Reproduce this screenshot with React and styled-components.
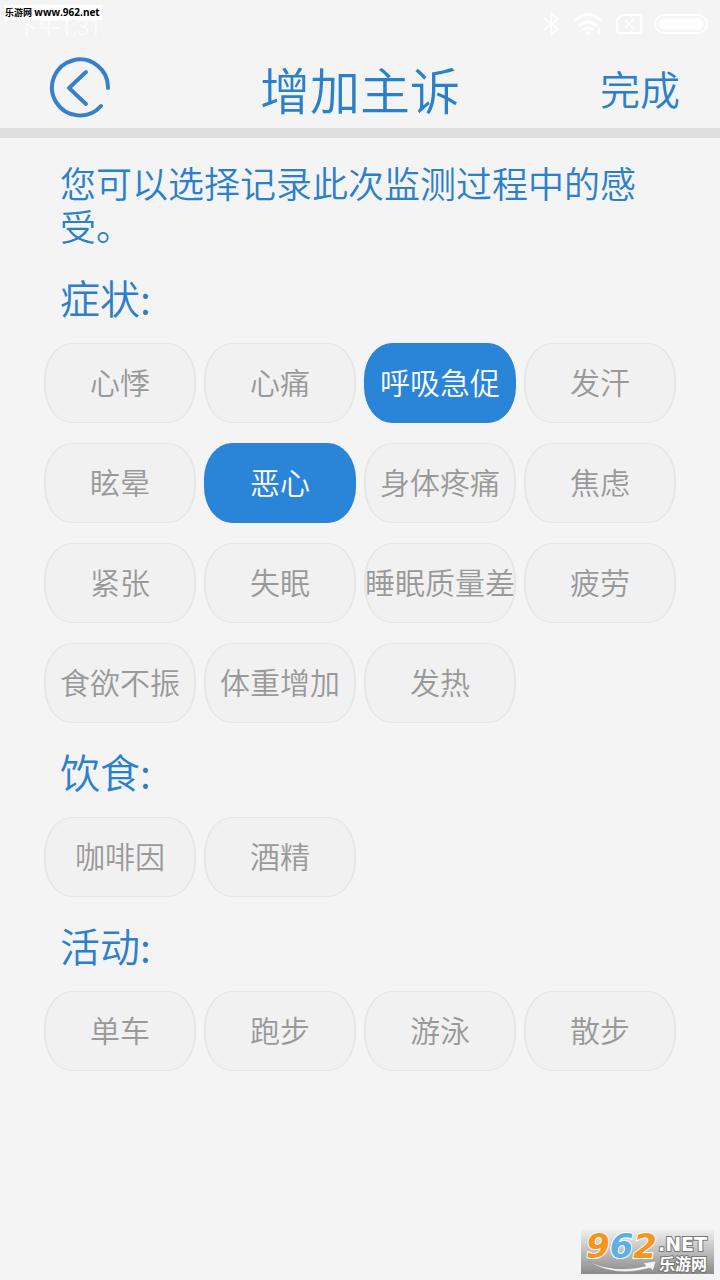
import styled, { createGlobalStyle, ThemeProvider } from 'styled-components';
import { useState } from 'react';

const theme = {
  blue: '#2a80cb',
  fill: '#2a84d8',
  page: '#f4f4f4',
  chip: '#f1f1f1',
  line: '#e6e6e6',
  grey: '#999999',
};

const GlobalStyle = createGlobalStyle`
  * {
    box-sizing: border-box;
  }
  body {
    margin: 0;
    background: #f4f4f4;
    font-family: 'Noto Sans CJK SC', sans-serif;
    font-weight: 350;
  }
  button {
    font: inherit;
    border: 0;
    padding: 0;
    background: none;
    cursor: pointer;
  }
`;

const Page = styled.div`
  position: relative;
  min-height: 100vh;
  color: ${({ theme }) => theme.blue};
  background: ${({ theme }) => theme.page};
`;

const StatusBar = styled.div`
  display: flex;
  align-items: center;
  justify-content: space-between;
  height: 48px;
  padding: 0 12px 0 16px;
  color: #fdfdfd;
  font-family: Roboto, 'Noto Sans CJK SC', sans-serif;
  font-size: 22px;
`;

const Clock = styled.span`
  padding-top: 8px;
  line-height: 32px;
`;

const StatusIcons = styled.div`
  display: flex;
  align-items: center;
  gap: 12px;
`;

const SiteTag = styled.div`
  position: absolute;
  top: 5px;
  left: 4px;
  padding: 0 2px 0 1px;
  color: #000;
  background: #fff;
  font-family: 'Open Sans', 'Noto Sans CJK SC', sans-serif;
  font-size: 9px;
  font-weight: 700;
  line-height: 14px;
  white-space: nowrap;
`;

const SiteUrl = styled.span`
  font-size: 10px;
`;

const TitleBar = styled.header`
  display: grid;
  grid-template-columns: 1fr auto 1fr;
  align-items: center;
  height: 90px;
  padding: 0 40px;
  border-bottom: 10px solid #dfdfdf;
`;

const BackBtn = styled.button`
  justify-self: start;
  width: 80px;
  height: 64px;
  svg {
    display: block;
    margin: 0 auto;
  }
`;

const Title = styled.h1`
  margin: 0;
  font-size: 50px;
  font-weight: inherit;
  line-height: 80px;
`;

const DoneBtn = styled.button`
  && {
    justify-self: end;
    color: inherit;
    font-size: 40px;
    line-height: 80px;
  }
`;

const Intro = styled.p`
  margin: 0;
  padding: 23px 60px 2px;
  font-size: 36px;
  line-height: 43px;
`;

const Section = styled.section`
  padding: 22px 44px 0;
`;

const SectionTitle = styled.h2`
  margin: 0 0 20px;
  padding-left: 16px;
  font-size: 40px;
  font-weight: inherit;
  line-height: 52px;
`;

const ChipGrid = styled.div`
  display: grid;
  grid-template-columns: repeat(4, minmax(0, 1fr));
  gap: 20px 8px;
`;

const Chip = styled.button`
  && {
    display: flex;
    align-items: center;
    justify-content: center;
    height: 80px;
    padding-bottom: 4px;
    border: solid ${({ theme, $on }) => ($on ? theme.fill : theme.line)};
    border-width: 1px 2px;
    border-radius: 28px / 36px;
    color: ${({ theme, $on }) => ($on ? '#fff' : theme.grey)};
    background: ${({ theme, $on }) => ($on ? theme.fill : theme.chip)};
    font-size: 30px;
    white-space: nowrap;
  }
`;

const Watermark = styled.div`
  position: absolute;
  right: 6px;
  bottom: 6px;
  svg {
    display: block;
    overflow: visible;
  }
`;

const groups = [
  {
    title: '症状:',
    items: [
      '心悸', '心痛', '呼吸急促', '发汗',
      '眩晕', '恶心', '身体疼痛', '焦虑',
      '紧张', '失眠', '睡眠质量差', '疲劳',
      '食欲不振', '体重增加', '发热',
    ],
  },
  { title: '饮食:', items: ['咖啡因', '酒精'] },
  { title: '活动:', items: ['单车', '跑步', '游泳', '散步'] },
];

function PhoneStatus() {
  return (
    <StatusBar>
      <Clock>下午1:31</Clock>
      <StatusIcons>
        <svg width="18" height="24" viewBox="0 0 18 24" fill="none" stroke="#fff" strokeWidth="2">
          <path d="M2 6l14 11-7 6V1l7 6L2 18" />
        </svg>
        <svg width="32" height="24" viewBox="0 0 32 24" fill="none" stroke="#fff" strokeWidth="3">
          <path d="M2 9Q16-4 30 9M7 14q9-8 18 0M11 18q5-4 10 0" />
          <circle cx="16" cy="21" r="2" fill="#fff" stroke="none" />
          <path d="M27 16v7" strokeWidth="2" />
        </svg>
        <svg width="26" height="20" viewBox="0 0 26 20" fill="none" stroke="#fff" strokeWidth="2">
          <path d="M6 1h17q2 0 2 2v14q0 2-2 2H3q-2 0-2-2V6zM9 6l8 8M17 6l-8 8" />
        </svg>
        <svg width="54" height="20" viewBox="0 0 54 20" fill="none" stroke="#fff" strokeWidth="2">
          <rect x="1" y="1" width="52" height="18" rx="9" />
          <rect x="5" y="4" width="44" height="12" rx="6" fill="#fff" stroke="none" />
        </svg>
      </StatusIcons>
    </StatusBar>
  );
}

function SiteLogo() {
  return (
    <svg width="133" height="44" viewBox="0 0 133 44">
      <defs>
        <linearGradient id="plate" x1="0" y1="0" x2="0" y2="1">
          <stop offset="0" stopColor="#eeeeee" />
          <stop offset="1" stopColor="#8b8b8b" />
        </linearGradient>
      </defs>
      <rect width="133" height="44" fill="url(#plate)" />
      <path
        d="M7 31q27 13 58 5l-3-3 13-2-3 10-3-3Q33 48 7 31z"
        fill="#f4f4f4"
        stroke="#888"
        strokeWidth="0.5"
      />
      <text
        x="5"
        y="28"
        fontFamily="'DejaVu Sans', sans-serif"
        fontSize="34"
        fontWeight="700"
        fontStyle="italic"
        stroke="#fff"
        strokeWidth="2"
        paintOrder="stroke"
      >
        <tspan fill="#f7941d">9</tspan>
        <tspan fill="#5fb0e2">6</tspan>
        <tspan fill="#f7941d">2</tspan>
      </text>
      <g fill="#fff" stroke="#777" strokeWidth="2" paintOrder="stroke" fontWeight="700">
        <text x="77" y="21" fontSize="19" fontFamily="'DejaVu Sans', sans-serif">.NET</text>
        <text x="78" y="40" fontSize="16" fontFamily="'Noto Sans CJK SC', sans-serif">乐游网</text>
      </g>
    </svg>
  );
}

export default function App() {
  const [picked, setPicked] = useState(['呼吸急促', '恶心']);

  const toggle = (name) => {
    setPicked(picked.includes(name) ? picked.filter((p) => p !== name) : [...picked, name]);
  };

  return (
    <ThemeProvider theme={theme}>
      <GlobalStyle />
      <Page>
        <PhoneStatus />
        <SiteTag>
          乐游网 <SiteUrl>www.962.net</SiteUrl>
        </SiteTag>
        <TitleBar>
          <BackBtn type="button" aria-label="返回">
            <svg width="64" height="64" viewBox="0 0 64 64" fill="none" stroke="#3a80c6" strokeWidth="4" strokeLinecap="round">
              <path d="M60 32A28 28 0 1 0 53 50" />
              <path d="M38 16L21 32l17 16" strokeLinejoin="round" />
            </svg>
          </BackBtn>
          <Title>增加主诉</Title>
          <DoneBtn type="button">完成</DoneBtn>
        </TitleBar>
        <main>
          <Intro>您可以选择记录此次监测过程中的感受。</Intro>
          {groups.map((group) => (
            <Section key={group.title}>
              <SectionTitle>{group.title}</SectionTitle>
              <ChipGrid>
                {group.items.map((name) => (
                  <Chip
                    key={name}
                    type="button"
                    $on={picked.includes(name)}
                    aria-pressed={picked.includes(name)}
                    onClick={() => toggle(name)}
                  >
                    {name}
                  </Chip>
                ))}
              </ChipGrid>
            </Section>
          ))}
        </main>
        <Watermark>
          <SiteLogo />
        </Watermark>
      </Page>
    </ThemeProvider>
  );
}
